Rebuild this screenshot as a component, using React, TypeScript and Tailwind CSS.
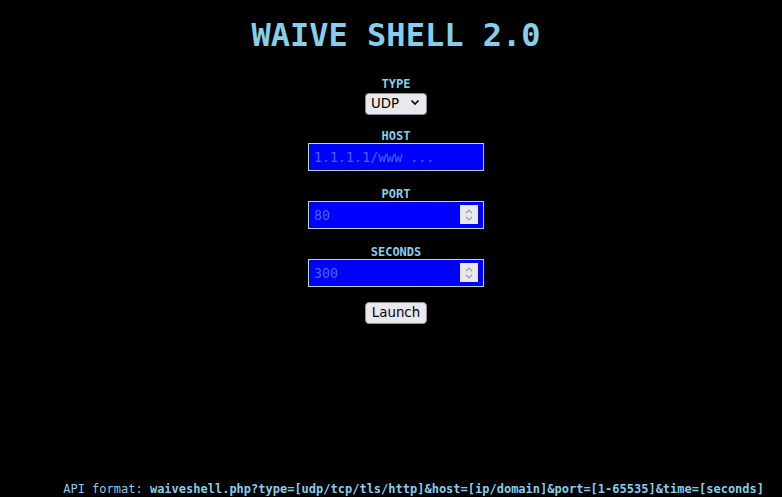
import React from 'react';

const fieldLabel = 'block text-[12px] font-bold leading-[14px] text-[#87ceeb]';
const fieldInput =
  'w-[176px] h-[28px] border border-[#add8e6] bg-[#0000ff] px-[5px] text-[13.333px] text-[#87ceeb] outline-none [appearance:textfield] [&::-webkit-inner-spin-button]:appearance-none [&::-webkit-outer-spin-button]:appearance-none';

function NumberField({ label, placeholder }: { label: string; placeholder: string }) {
  return (
    <div className="flex flex-col items-center">
      <label className={fieldLabel}>{label}</label>
      <div className="relative">
        <input type="number" placeholder={placeholder} className={fieldInput + ' pr-[26px]'} />
        {/* spin buttons */}
        <div className="pointer-events-none absolute right-[6px] top-[4px] w-[18px] h-[19px] bg-[#e9e9ed] flex flex-col items-center justify-center gap-[2px]">
          <svg className="w-[8px] h-[5px]" viewBox="0 0 8 5" fill="none" stroke="#9a9aa0" strokeWidth="1.2">
            <path d="M1 4.2L4 1.2l3 3" />
          </svg>
          <svg className="w-[8px] h-[5px]" viewBox="0 0 8 5" fill="none" stroke="#9a9aa0" strokeWidth="1.2">
            <path d="M1 0.8L4 3.8l3-3" />
          </svg>
        </div>
      </div>
    </div>
  );
}

export default function App() {
  return (
    <div className="min-h-screen bg-black flex flex-col font-['DejaVu_Sans_Mono',monospace] text-[#87ceeb]">
      <div className="pl-[10px]">
        <h1 className="mt-[17px] text-center text-[32px] font-bold leading-[37px]">WAIVE SHELL 2.0</h1>
        <form className="mt-[23px] flex flex-col items-center gap-4" onSubmit={(e) => e.preventDefault()}>
          <div className="flex flex-col items-center">
            <label className={fieldLabel}>TYPE</label>
            <div className="relative w-[62px] h-[22px]">
              <select
                defaultValue="udp"
                className="w-full h-full appearance-none rounded-[4px] border border-[#8f8f9d] bg-[#e9e9ed] pl-[5px] font-['DejaVu_Sans',sans-serif] text-[13.333px] text-black outline-none"
              >
                <option value="udp">UDP</option>
                <option value="tcp">TCP</option>
                <option value="tls">TLS</option>
                <option value="http">HTTP</option>
              </select>
              <svg
                className="pointer-events-none absolute right-[7px] top-[8px] w-[10px] h-[7px]"
                viewBox="0 0 10 7"
                fill="none"
                stroke="#000"
                strokeWidth="1.6"
              >
                <path d="M1.5 1.5l3.5 3.5 3.5-3.5" />
              </svg>
            </div>
          </div>
          <div className="flex flex-col items-center">
            <label className={fieldLabel}>HOST</label>
            <input type="text" placeholder="1.1.1.1/www ..." className={fieldInput} />
          </div>
          <NumberField label="PORT" placeholder="80" />
          <NumberField label="SECONDS" placeholder="300" />
          <button
            type="submit"
            className="-mt-px h-[22px] px-[6px] rounded-[4px] border border-[#8f8f9d] bg-[#e9e9ed] font-['DejaVu_Sans',sans-serif] text-[13.333px] text-black"
          >
            Launch
          </button>
        </form>
      </div>
      <footer className="mt-auto pr-[18px] pb-px text-right text-[12px] leading-[14px]">
        API format: <b>waiveshell.php?type=[udp/tcp/tls/http]&amp;host=[ip/domain]&amp;port=[1-65535]&amp;time=[seconds]</b>
      </footer>
    </div>
  );
}
